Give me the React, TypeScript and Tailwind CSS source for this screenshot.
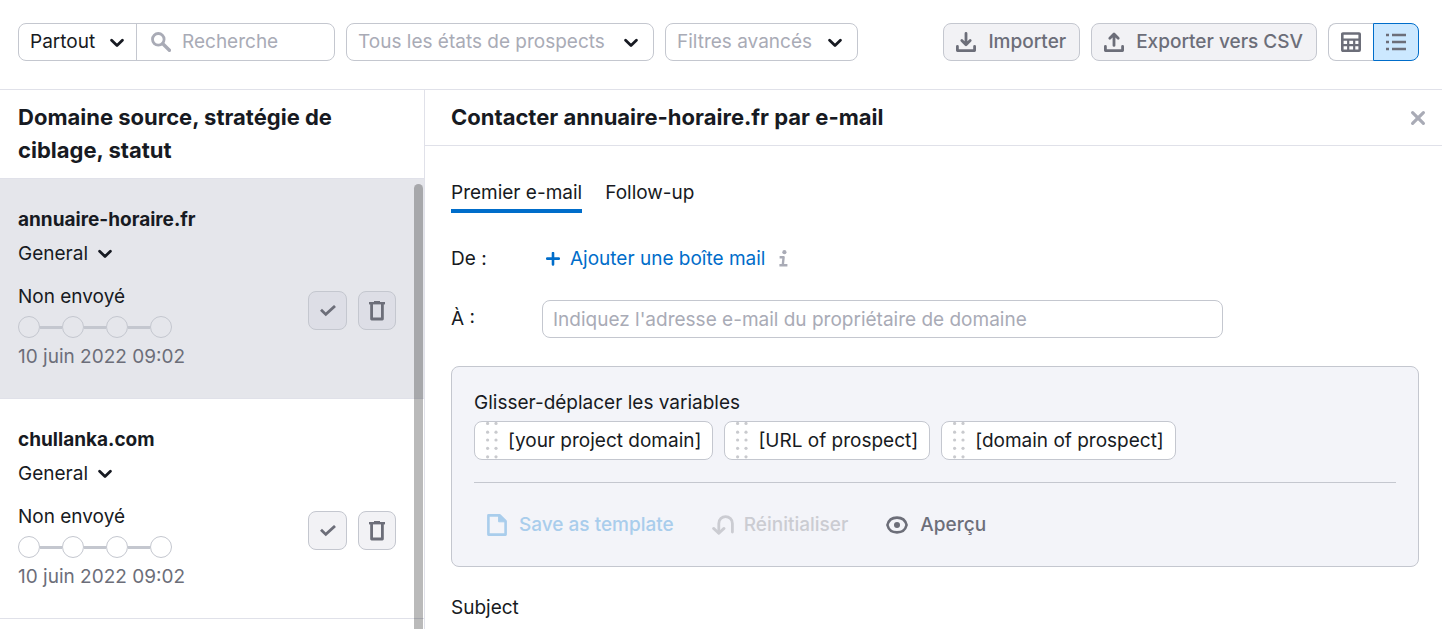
import React, { useState } from 'react';
import clsx from 'clsx';

type IconProps = { className?: string };

const ChevronIcon: React.FC<IconProps> = ({ className }) => (
  <svg className={className} width="14" height="10" viewBox="0 0 14 10" fill="none" stroke="currentColor" strokeWidth="2.8" strokeLinecap="round" strokeLinejoin="round" aria-hidden="true">
    <path d="M1.6 2.2 7 7.4l5.4-5.2" />
  </svg>
);

const SearchIcon: React.FC<IconProps> = ({ className }) => (
  <svg className={className} width="20" height="20" viewBox="0 0 20 20" fill="none" stroke="currentColor" aria-hidden="true">
    <circle cx="7.3" cy="7.3" r="5.8" strokeWidth="2.8" />
    <path d="m11.8 11.8 6.6 6.4" strokeWidth="3.4" strokeLinecap="round" />
  </svg>
);

const DownloadIcon = () => (
  <svg width="20" height="20" viewBox="0 0 20 20" fill="none" stroke="currentColor" strokeWidth="2.8" strokeLinecap="round" strokeLinejoin="round" aria-hidden="true">
    <path d="M10 1.4v11M5.8 8.6l4.2 4.2 4.2-4.2" />
    <path d="M1.4 14.4v4.2h17.2v-4.2" />
  </svg>
);

const UploadIcon = () => (
  <svg width="20" height="20" viewBox="0 0 20 20" fill="none" stroke="currentColor" strokeWidth="2.8" strokeLinecap="round" strokeLinejoin="round" aria-hidden="true">
    <path d="M10 13.4V2.2M5.8 6.2 10 2l4.2 4.2" />
    <path d="M1.4 14.4v4.2h17.2v-4.2" />
  </svg>
);

const TableIcon = () => (
  <svg width="20" height="20" viewBox="0 0 20 20" fill="none" stroke="currentColor" strokeWidth="2.6" aria-hidden="true">
    <rect x="1.3" y="1.5" width="17.4" height="17.2" rx="0.6" />
    <path d="M1 7.6h18M1 13.2h18M7.2 8v11M13.2 8v11" strokeWidth="2.2" />
  </svg>
);

const ListIcon = () => (
  <svg width="20" height="20" viewBox="0 0 20 20" stroke="currentColor" strokeWidth="2.6" aria-hidden="true">
    <path d="M0 3h3M0 10h3M0 17h3M6 3h14M6 10h14M6 17h14" />
  </svg>
);

const CheckIcon = () => (
  <svg width="16" height="12" viewBox="0 0 16 12" fill="none" stroke="currentColor" strokeWidth="2.8" aria-hidden="true">
    <path d="m1 4.8 4.8 4.6L15 1" />
  </svg>
);

const TrashIcon = () => (
  <svg width="16" height="20" viewBox="0 0 16 20" fill="none" stroke="currentColor" strokeWidth="2.8" aria-hidden="true">
    <path d="M0 2.2h16" strokeWidth="2.4" />
    <path d="M5 1h6" strokeWidth="2" />
    <path d="M2.6 3v15h10.8V3" strokeLinejoin="round" />
  </svg>
);

const CloseIcon = () => (
  <svg width="16" height="16" viewBox="0 0 16 16" stroke="currentColor" strokeWidth="3.2" strokeLinecap="round" aria-hidden="true">
    <path d="m2.6 2.6 10.8 10.8M13.4 2.6 2.6 13.4" />
  </svg>
);

const PlusIcon = () => (
  <svg width="14" height="14" viewBox="0 0 14 14" stroke="currentColor" strokeWidth="2.6" strokeLinecap="round" aria-hidden="true">
    <path d="M7 1v11.4M1.2 6.6h11.6" />
  </svg>
);

const InfoIcon = () => (
  <svg width="9" height="18" viewBox="0 0 9 18" fill="none" stroke="currentColor" strokeWidth="2.4" aria-hidden="true">
    <circle cx="5.4" cy="2.2" r="2.1" fill="currentColor" stroke="none" />
    <path d="M.6 7.2h4L3.8 15M.4 15.2h8" strokeLinejoin="round" />
  </svg>
);

const FileIcon = () => (
  <svg width="20" height="22" viewBox="0 0 20 22" fill="none" stroke="currentColor" strokeWidth="2.6" strokeLinejoin="round" aria-hidden="true">
    <path d="M1.4 1.4h11.4l5.8 5.8v13.4H1.4z" />
    <path d="M11.6 1.4v6.4h7V7z" fill="currentColor" strokeWidth="1" />
  </svg>
);

const ResetIcon = () => (
  <svg width="22" height="20" viewBox="0 0 22 20" fill="none" stroke="currentColor" strokeWidth="2.8" strokeLinecap="round" strokeLinejoin="round" aria-hidden="true">
    <path d="M20.4 17V8.4a6.8 6.8 0 0 0-13.6 0V18" />
    <path d="m1.6 13.4 5.2 4.8 5.2-4.8" />
  </svg>
);

const EyeIcon = () => (
  <svg width="22" height="18" viewBox="0 0 22 18" fill="none" stroke="currentColor" strokeWidth="2.6" aria-hidden="true">
    <path d="M1.4 9C2.6 4.2 6.2 1.6 11 1.6S19.4 4.2 20.6 9C19.4 13.8 15.8 16.4 11 16.4S2.6 13.8 1.4 9Z" />
    <circle cx="11" cy="9" r="3" fill="currentColor" stroke="none" />
  </svg>
);

const DragDots = () => (
  <svg width="12" height="37" viewBox="0 0 12 37" fill="#c9cace" aria-hidden="true">
    {[1.5, 10.2, 18, 26.3, 34.8].map((y) => (
      <g key={y}>
        <circle cx="1.6" cy={y} r="1.6" />
        <circle cx="10" cy={y} r="1.6" />
      </g>
    ))}
  </svg>
);

const SelectBox: React.FC<{ label: string; value: string; className?: string; selectClass?: string; iconClass: string }> = ({
  label,
  value,
  className,
  selectClass,
  iconClass,
}) => (
  <div className={clsx('relative h-[38px]', className)}>
    <select aria-label={label} className={clsx('h-full appearance-none bg-transparent pl-[11px] outline-none', selectClass)}>
      <option>{value}</option>
    </select>
    <ChevronIcon className={clsx('pointer-events-none absolute text-[#171a22]', iconClass)} />
  </div>
);

const prospects = [
  { domain: 'annuaire-horaire.fr', strategy: 'General', status: 'Non envoyé', date: '10 juin 2022 09:02' },
  { domain: 'chullanka.com', strategy: 'General', status: 'Non envoyé', date: '10 juin 2022 09:02' },
];

const variables = ['[your project domain]', '[URL of prospect]', '[domain of prospect]'];

const Steps = () => (
  <div className="mt-[5px] flex items-center">
    {[0, 1, 2, 3].map((i) => (
      <React.Fragment key={i}>
        {i > 0 && <span className="h-[3px] w-[22px] bg-[#c4c7cf]" />}
        <span className="size-[22px] rounded-full border border-[#c4c7cf]" />
      </React.Fragment>
    ))}
  </div>
);

const App: React.FC = () => {
  const [selected, setSelected] = useState(0);
  const [tab, setTab] = useState('Premier e-mail');

  const actionButton = 'flex h-[38px] items-center gap-3 rounded-lg border border-[#c4c7cf] bg-[#f2f2f5] pr-[13px] pl-3 font-medium text-[#6c6e79]';

  return (
    <div className="flex h-screen flex-col overflow-hidden bg-white font-['Inter',sans-serif] text-[19px] leading-7 font-normal text-[#171a22]">
      <header className="flex shrink-0 items-center gap-[11px] border-b border-[#e0e1e9] pt-[23px] pr-[23px] pb-7 pl-[18px]">
        <div className="flex w-[317px] items-center rounded-lg border border-[#c4c7cf]">
          <SelectBox label="Zone" value="Partout" className="-my-px border-r border-[#c4c7cf]" selectClass="w-[117px]" iconClass="top-[15px] right-3" />
          <label className="flex min-w-0 flex-1 items-center gap-[11px] pl-3.5">
            <SearchIcon className="shrink-0 text-[#a9abb6]" />
            <input type="text" placeholder="Recherche" aria-label="Recherche" className="w-full min-w-0 outline-none placeholder:text-[#a9abb6]" />
          </label>
        </div>
        <SelectBox label="États" value="Tous les états de prospects" className="rounded-lg border border-[#c4c7cf]" selectClass="w-[306px] text-[#a9abb6]" iconClass="top-3.5 right-[15px]" />
        <SelectBox label="Filtres" value="Filtres avancés" className="rounded-lg border border-[#c4c7cf]" selectClass="w-[191px] text-[#a9abb6]" iconClass="top-3.5 right-[15px]" />
        <div className="ml-auto flex gap-[11px]">
          <button className={actionButton}>
            <DownloadIcon />
            Importer
          </button>
          <button className={actionButton}>
            <UploadIcon />
            Exporter vers CSV
          </button>
          <div className="flex text-[#6c6e79]">
            <button aria-label="Tableau" className="flex h-[38px] w-[45px] items-center justify-center rounded-l-lg border border-r-0 border-[#c4c7cf]">
              <TableIcon />
            </button>
            <button aria-label="Liste" className="flex h-[38px] w-[46px] items-center justify-center rounded-r-lg border border-[#006dca] bg-[#cce8ff]">
              <ListIcon />
            </button>
          </div>
        </div>
      </header>

      <div className="flex min-h-0 flex-1">
        <aside className="flex w-[425px] shrink-0 flex-col border-r border-[#e0e1e9]">
          <h2 className="border-b border-[#e0e1e9] px-[18px] pt-[11px] pb-[11px] text-[22px] leading-[33px] font-bold">
            Domaine source, stratégie de ciblage, statut
          </h2>
          <div className="relative min-h-0 flex-1 overflow-hidden">
            <ul>
              {prospects.map((p, i) => {
                const active = i === selected;
                const square = clsx(
                  'flex h-[39px] items-center justify-center rounded-lg border border-[#c4c7cf] text-[#6c6e79]',
                  active ? 'bg-[#dddee6]' : 'bg-[#f2f2f5]'
                );
                return (
                  <li
                    key={p.domain}
                    onClick={() => setSelected(i)}
                    className={clsx('border-b border-[#e0e1e9] pt-[27px] pr-7 pb-[27px] pl-[18px]', active && 'bg-[#e5e6eb]')}
                  >
                    <h3 className="font-bold">{p.domain}</h3>
                    <button className="mt-1.5 flex items-center gap-2.5">
                      {p.strategy}
                      <ChevronIcon />
                    </button>
                    <div className="mt-[15px] flex items-start justify-between">
                      <div>
                        <p>{p.status}</p>
                        <Steps />
                        <p className="mt-[5px] text-[#6c6e79]">{p.date}</p>
                      </div>
                      <div className="mt-2 flex gap-[11px]">
                        <button aria-label="Valider" className={clsx(square, 'w-[39px]')}>
                          <CheckIcon />
                        </button>
                        <button aria-label="Supprimer" className={clsx(square, 'w-[38px]')}>
                          <TrashIcon />
                        </button>
                      </div>
                    </div>
                  </li>
                );
              })}
            </ul>
            <div className="absolute top-[5px] right-px bottom-0 w-[9px] rounded-t-full bg-black/27" />
          </div>
        </aside>

        <main className="min-w-0 flex-1">
          <div className="flex items-center justify-between border-b border-[#e0e1e9] py-[11px] pr-4 pl-[26px]">
            <h2 className="text-[22px] leading-[33px] font-bold">Contacter annuaire-horaire.fr par e-mail</h2>
            <button aria-label="Fermer" className="text-[#a9abb6]">
              <CloseIcon />
            </button>
          </div>

          <div className="pt-[33px] pr-[23px] pl-[26px]">
            <div className="flex gap-[23px]" role="tablist">
              {['Premier e-mail', 'Follow-up'].map((name) => (
                <button
                  key={name}
                  role="tab"
                  aria-selected={tab === name}
                  onClick={() => setTab(name)}
                  className={clsx('border-b-4 pb-0.5', tab === name ? 'border-[#006dca]' : 'border-transparent')}
                >
                  {name}
                </button>
              ))}
            </div>

            <div className="mt-8 flex items-center">
              <span className="w-[95px]">De :</span>
              <a href="#mailbox" className="flex items-center gap-2.5 text-[#006dca]">
                <PlusIcon />
                Ajouter une boîte mail
              </a>
              <span className="ml-3.5 text-[#a9abb6]">
                <InfoIcon />
              </span>
            </div>

            <div className="mt-[27px] flex items-center">
              <label htmlFor="recipient" className="w-[91px]">À :</label>
              <input
                id="recipient"
                type="email"
                placeholder="Indiquez l'adresse e-mail du propriétaire de domaine"
                className="h-[38px] max-w-[681px] min-w-0 flex-1 rounded-lg border border-[#c4c7cf] px-2.5 outline-none placeholder:text-[#a9abb6]"
              />
            </div>

            <section className="mt-7 rounded-lg border border-[#c4c7cf] bg-[#f3f4f9] px-[22px] pt-[22px] pb-[27px]">
              <p>Glisser-déplacer les variables</p>
              <div className="mt-1 flex gap-[11px]">
                {variables.map((v) => (
                  <span key={v} draggable className="flex h-[39px] items-center gap-2.5 rounded-lg border border-[#c4c7cf] bg-white px-[11px]">
                    <DragDots />
                    {v}
                  </span>
                ))}
              </div>
              <hr className="mt-[22px] border-[#c4c7cf]" />
              <div className="mt-7 flex items-center gap-[38px] pl-[13px] font-medium">
                <button disabled className="flex items-center gap-3 text-[#a9cdec]">
                  <FileIcon />
                  Save as template
                </button>
                <button disabled className="flex items-center gap-2.5 text-[#cbccd2]">
                  <ResetIcon />
                  Réinitialiser
                </button>
                <button className="flex items-center gap-3 text-[#6c6e79]">
                  <EyeIcon />
                  Aperçu
                </button>
              </div>
            </section>

            <p className="mt-[27px]">Subject</p>
          </div>
        </main>
      </div>
    </div>
  );
};

export default App;
